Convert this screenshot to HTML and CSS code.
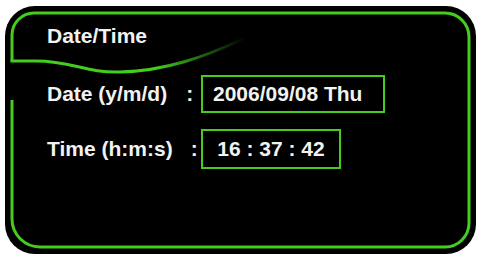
FILE: index.html
```html
<!DOCTYPE html>
<html>
<head>
<meta charset="utf-8">
<link rel="stylesheet" href="styles.css">
</head>
<body>
<div class="panel">
  <svg class="frame" width="478" height="254" viewBox="0 0 478 254">
    <defs>
      <linearGradient id="fade" gradientUnits="userSpaceOnUse" x1="12" y1="0" x2="245" y2="0">
        <stop offset="0" stop-color="#44cc1f" stop-opacity="1"/>
        <stop offset="0.62" stop-color="#44cc1f" stop-opacity="1"/>
        <stop offset="1" stop-color="#44cc1f" stop-opacity="0"/>
      </linearGradient>
    </defs>
    <path d="M12,100 L12,219 A28,28 0 0 0 40,247 L445,247 A24,24 0 0 0 469,223 L469,37 A24,24 0 0 0 445,13 L34,13 A22,22 0 0 0 12,35 L12,61" fill="none" stroke="#44cc1f" stroke-width="3"/>
    <path d="M10.5,61 L36,61 C72,61 86,73 120,72 C165,71 205,57 245,38" fill="none" stroke="url(#fade)" stroke-width="3"/>
  </svg>
  <div class="title">Date/Time</div>
  <div class="row row-date">
    <div class="label"><span>Date (y/m/d)</span><span class="colon">:</span></div>
    <div class="box box-date">2006/09/08 Thu</div>
  </div>
  <div class="row row-time">
    <div class="label"><span>Time (h:m:s)</span><span class="colon colon-time">:</span></div>
    <div class="box box-time">16 : 37 : 42</div>
  </div>
</div>
</body>
</html>
```
FILE: styles.css
```css
html, body {
  margin: 0;
  padding: 0;
  background: #ffffff;
}
body {
  width: 478px;
  height: 254px;
  overflow: hidden;
  font-family: "Liberation Sans", Arial, sans-serif;
  font-weight: bold;
  font-size: 21px;
  color: #f2f2f2;
}
.panel {
  position: relative;
  margin: 6px 0 0 5px;
  width: 471px;
  height: 248px;
  background: #000000;
  border-radius: 30px;
  box-sizing: border-box;
  padding: 20px 0 0 42px;
}
.frame {
  position: absolute;
  left: -5px;
  top: -6px;
}
.title {
  position: relative;
  line-height: 20px;
  height: 20px;
}
.row {
  position: relative;
  display: flex;
  align-items: center;
  line-height: 20px;
}
.row-date {
  margin-top: 29px;
}
.row-time {
  margin-top: 16px;
}
.label {
  width: 154px;
  display: flex;
}
.colon {
  margin-left: 19px;
}
.colon-time {
  margin-left: 18px;
}
.box {
  border: 2px solid #44cc1f;
  box-sizing: border-box;
  display: flex;
  align-items: center;
}
.box-date {
  width: 184px;
  height: 38px;
  padding-left: 10px;
}
.box-time {
  width: 140px;
  height: 40px;
  justify-content: center;
}
```
